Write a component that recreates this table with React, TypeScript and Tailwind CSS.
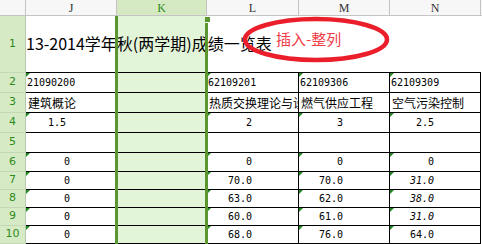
import React from 'react'

type Cell = { t?: string; kind?: 'code' | 'cn' | 'num'; flag?: boolean; italic?: boolean; pr?: string }
type Row = { n: string; h: string; cells: Cell[] }

const widths = ['w-[91px]', 'w-[90px]', 'w-[92px]', 'w-[91px]', 'w-[91px]']
const letters = ['J', 'K', 'L', 'M', 'N']

const num = (t: string, italic = false, pr = 'pr-[46px]'): Cell => ({ t, kind: 'num', flag: true, italic, pr })

const rows: Row[] = [
  {
    n: '2',
    h: 'h-[20px]',
    cells: [
      { t: '21090200', kind: 'code', flag: true },
      {},
      { t: '62109201', kind: 'code', flag: true },
      { t: '62109306', kind: 'code', flag: true },
      { t: '62109309', kind: 'code', flag: true },
    ],
  },
  {
    n: '3',
    h: 'h-[20px]',
    cells: [
      { t: '建筑概论', kind: 'cn' },
      {},
      { t: '热质交换理论与设备', kind: 'cn' },
      { t: '燃气供应工程', kind: 'cn' },
      { t: '空气污染控制', kind: 'cn' },
    ],
  },
  { n: '4', h: 'h-[20px]', cells: [num('1.5', false, 'pr-[50px]'), {}, num('2'), num('3'), num('2.5')] },
  { n: '5', h: 'h-[20px]', cells: [{}, {}, {}, {}, {}] },
  { n: '6', h: 'h-[19px]', cells: [num('0'), {}, num('0'), num('0'), num('0')] },
  { n: '7', h: 'h-[18px]', cells: [num('0'), {}, num('70.0'), num('70.0'), num('31.0', true)] },
  { n: '8', h: 'h-[18px]', cells: [num('0'), {}, num('63.0'), num('62.0'), num('38.0', true)] },
  { n: '9', h: 'h-[18px]', cells: [num('0'), {}, num('60.0'), num('61.0'), num('31.0', true)] },
  { n: '10', h: 'h-[18px]', cells: [num('0'), {}, num('68.0'), num('76.0'), num('64.0')] },
]

function Flag() {
  return (
    <span className="absolute left-0 top-0 w-0 h-0 border-t-[4px] border-r-[4px] border-t-[#1d8a1d] border-r-transparent" />
  )
}

function RowHead({ n, h }: { n: string; h: string }) {
  return (
    <div
      className={`${h} w-[26px] shrink-0 flex items-center justify-center bg-[#d6eac5] border-r border-r-[#b8c8ae] border-b border-b-[#c4d8b6] text-[#2f8a1b] text-[11px] font-['DejaVu_Sans',sans-serif]`}
    >
      {n}
    </div>
  )
}

export default function App() {
  return (
    <div className="relative w-[482px] h-[244px] overflow-hidden bg-white">
      {/* column headers */}
      <div className="flex h-[16px]">
        <div className="w-[26px] shrink-0 bg-[#f7f7f7] border-r border-b border-[#c4c4c4]" />
        {letters.map((l, i) => (
          <div
            key={l}
            className={`${widths[i]} shrink-0 flex items-center justify-center border-r border-b border-[#c4c4c4] text-[12px] font-['Liberation_Serif',serif] ${
              l === 'K' ? 'bg-[#d5eac3] text-[#2f8a1b]' : 'bg-[#f7f7f7] text-[#333]'
            }`}
          >
            {l}
          </div>
        ))}
        <div className="flex-1 bg-[#f7f7f7] border-b border-[#c4c4c4]" />
      </div>

      {/* row 1: title */}
      <div className="flex h-[57px]">
        <RowHead n="1" h="h-[57px]" />
        {widths.map((w, i) => (
          <div key={i} className={`${w} shrink-0 relative border-b border-black ${i === 1 ? 'bg-[#e3f5d8]' : ''}`}>
            {i === 0 && (
              <span className="absolute z-10 left-0 top-[19px] whitespace-nowrap text-[16px] leading-none text-black font-['Noto_Sans_CJK_SC',sans-serif]">
                13-2014学年秋(两学期)成绩一览表
              </span>
            )}
          </div>
        ))}
      </div>

      {rows.map((r) => (
        <div key={r.n} className="flex">
          <RowHead n={r.n} h={r.h} />
          {r.cells.map((c, i) => (
            <div
              key={i}
              className={`${widths[i]} ${r.h} shrink-0 relative overflow-hidden flex items-center border-b border-r border-black whitespace-nowrap text-black ${
                i === 1 ? 'bg-[#e3f5d8]' : ''
              } ${c.kind === 'num' ? `justify-end ${c.pr}` : 'pl-[1px]'} ${
                c.kind === 'cn'
                  ? "text-[12px] leading-none font-['Noto_Sans_CJK_SC',sans-serif] pl-[2px]"
                  : "text-[10px] leading-none font-['DejaVu_Sans_Mono',monospace]"
              } ${c.italic ? 'italic' : ''}`}
            >
              {c.flag && <Flag />}
              {c.t}
            </div>
          ))}
        </div>
      ))}

      {/* selection of column K */}
      <div className="absolute z-20 left-[115px] top-[16px] bottom-0 w-[3px] bg-[#5b9632]" />
      <div className="absolute z-20 left-[205px] top-[17px] w-[5px] h-[5px] bg-[#5b9632]" />
      <div className="absolute z-20 left-[205px] top-[23px] bottom-0 w-[3px] bg-[#5b9632]" />

      {/* annotation */}
      <svg className="absolute z-30 left-[242px] top-[16px]" width="148" height="47" viewBox="0 0 148 47">
        <ellipse cx="74" cy="23.5" rx="71" ry="20.5" fill="none" stroke="#ea1f2b" strokeWidth="4.5" />
      </svg>
      <span className="absolute z-30 left-[276px] top-[31px] whitespace-nowrap text-[15px] leading-none text-[#ef3c47] font-['Noto_Sans_CJK_SC',sans-serif]">
        插入-整列
      </span>
    </div>
  )
}
